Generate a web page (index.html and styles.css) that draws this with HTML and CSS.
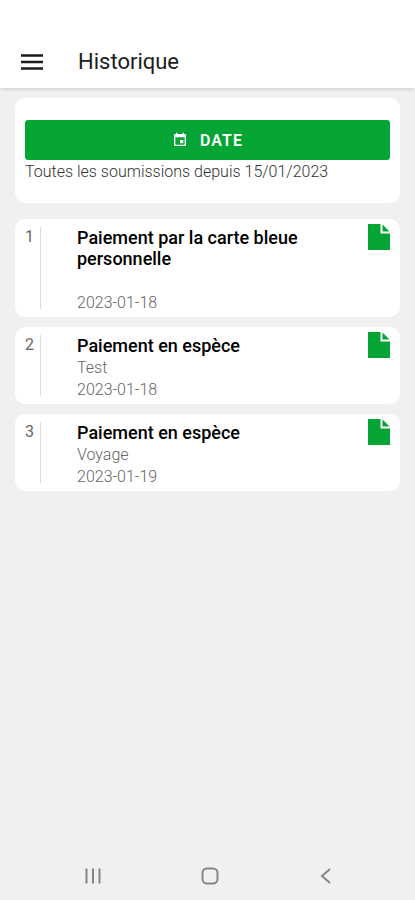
FILE: index.html
```html
<!DOCTYPE html>
<html lang="fr">
<head>
    <meta charset="UTF-8">
    <meta name="viewport" content="width=device-width, initial-scale=1.0">
    <title>Historique</title>
    <link rel="stylesheet" href="styles.css">
</head>
<body>
    <header class="topbar">
        <button class="menu-button" type="button" aria-label="Menu">
            <svg width="22" height="16" viewBox="0 0 22 16"><path d="M0 1.5h22M0 8h22M0 14.5h22" stroke="#1c1c1c" stroke-width="2.6"/></svg>
        </button>
        <h1>Historique</h1>
    </header>
    <main>
        <section class="card filter">
            <button class="date-button" type="button">
                <svg width="16" height="16" viewBox="0 0 24 24" fill="#fff"><path d="M17 12h-5v5h5v-5zM16 1v2H8V1H6v2H5c-1.1 0-2 .9-2 2v14c0 1.1.9 2 2 2h14c1.1 0 2-.9 2-2V5c0-1.1-.9-2-2-2h-1V1h-2zm3 18H5V8h14v11z"/></svg>
                <span>DATE</span>
            </button>
            <p>Toutes les soumissions depuis 15/01/2023</p>
        </section>
        <ul class="list">
            <li class="card item">
                <span class="number">1</span>
                <div class="details">
                    <h2>Paiement par la carte bleue personnelle</h2>
                    <p></p>
                    <p>2023-01-18</p>
                </div>
                <a class="file" href="#" aria-label="Document">
                    <svg width="22" height="26" viewBox="0 0 22 26" fill="#05a535"><path d="M0 0h12.5v9.5H22V26H0z"/><path d="M14.5 .5l7 7h-7z"/></svg>
                </a>
            </li>
            <li class="card item">
                <span class="number">2</span>
                <div class="details">
                    <h2>Paiement en espèce</h2>
                    <p>Test</p>
                    <p>2023-01-18</p>
                </div>
                <a class="file" href="#" aria-label="Document">
                    <svg width="22" height="26" viewBox="0 0 22 26" fill="#05a535"><path d="M0 0h12.5v9.5H22V26H0z"/><path d="M14.5 .5l7 7h-7z"/></svg>
                </a>
            </li>
            <li class="card item">
                <span class="number">3</span>
                <div class="details">
                    <h2>Paiement en espèce</h2>
                    <p>Voyage</p>
                    <p>2023-01-19</p>
                </div>
                <a class="file" href="#" aria-label="Document">
                    <svg width="22" height="26" viewBox="0 0 22 26" fill="#05a535"><path d="M0 0h12.5v9.5H22V26H0z"/><path d="M14.5 .5l7 7h-7z"/></svg>
                </a>
            </li>
        </ul>
    </main>
    <nav class="system-bar">
        <button type="button" aria-label="Applications récentes">
            <svg width="18" height="18" viewBox="0 0 18 18"><path d="M2.5 1.5v15M9 1.5v15M15.5 1.5v15"/></svg>
        </button>
        <button type="button" aria-label="Accueil">
            <svg width="18" height="18" viewBox="0 0 18 18"><rect x="1.5" y="1.5" width="15" height="15" rx="4.5"/></svg>
        </button>
        <button type="button" aria-label="Retour">
            <svg width="18" height="18" viewBox="0 0 18 18"><path d="M13 2L5 9l8 7"/></svg>
        </button>
    </nav>
</body>
</html>
```
FILE: styles.css
```css
* {
    box-sizing: border-box;
}
body {
    display: flex;
    flex-direction: column;
    min-height: 100vh;
    margin: 0;
    background-color: #f0f0f0;
    color: #000;
    font-family: Roboto, sans-serif;
}
h1, h2, p, ul {
    margin: 0;
    padding: 0;
}
button {
    padding: 0;
    border: none;
    background: none;
    font-family: inherit;
    cursor: pointer;
}
svg {
    display: block;
}
.topbar {
    display: flex;
    align-items: center;
    gap: 35px;
    padding: 48px 21px 12px;
    background-color: #fff;
    box-shadow: 0 1px 4px rgba(0, 0, 0, 0.15);
}
.topbar h1 {
    color: #1c1c1c;
    font-size: 22px;
    font-weight: 400;
    line-height: 28px;
}
main {
    flex: 1;
    padding: 10px 15px;
}
.card {
    border-radius: 10px;
    background-color: #fff;
}
.filter {
    padding: 22px 10px 19px;
}
.date-button {
    display: flex;
    align-items: center;
    justify-content: center;
    gap: 12px;
    width: 100%;
    height: 40px;
    border-radius: 3px;
    background-color: #05a535;
    color: #fff;
    font-size: 16px;
    font-weight: 600;
    letter-spacing: 1px;
}
.filter p {
    color: #333;
    font-size: 16px;
    font-weight: 300;
    line-height: 24px;
}
.list {
    display: flex;
    flex-direction: column;
    gap: 10px;
    margin-top: 16px;
    list-style: none;
}
.item {
    display: flex;
    padding: 8px 10px 3px;
}
.number {
    width: 16px;
    margin-bottom: 5px;
    border-right: 1px solid #ddd;
    color: #666;
    font-size: 16px;
    line-height: 20px;
}
.details {
    flex: 1;
    padding: 0 16px 0 36px;
}
.details h2 {
    margin-bottom: 1px;
    font-size: 18px;
    font-weight: 500;
    line-height: 21px;
}
.details p {
    min-height: 22px;
    color: #666;
    font-size: 16px;
    font-weight: 300;
    line-height: 22px;
}
.file {
    align-self: flex-start;
    margin-top: -3px;
}
.system-bar {
    display: flex;
    justify-content: space-between;
    padding: 15px 80px 15px 84px;
}
.system-bar svg {
    fill: none;
    stroke: #858585;
    stroke-width: 2;
}
```
